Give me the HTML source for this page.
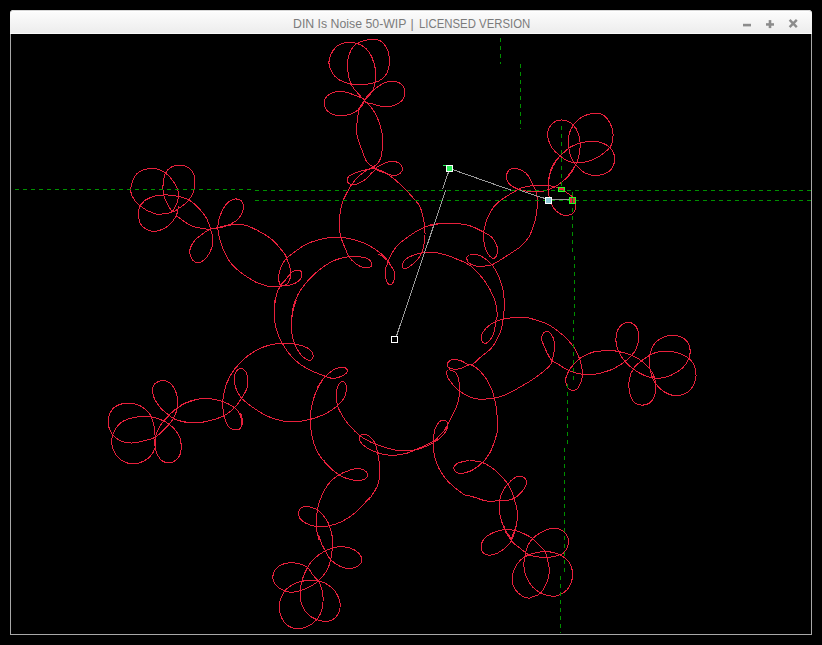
<!DOCTYPE html>
<html><head><meta charset="utf-8">
<style>
html,body{margin:0;padding:0;background:#000;width:822px;height:645px;overflow:hidden;}
#win{position:absolute;left:10px;top:10px;width:802px;height:625px;}
#title{position:absolute;left:0;top:0;width:802px;height:24px;border-radius:4px 4px 0 0;
background:linear-gradient(#fdfdfd,#ececec);box-shadow:inset 0 1px 0 #d6d6d6,inset 0 2px 0 #ffffff;}
#ttext{position:absolute;left:0;top:7px;width:802px;height:16px;font-family:"Liberation Sans",sans-serif;font-size:12.5px;color:#7b7b7b;white-space:nowrap;}
#ttext span{position:absolute;top:0;transform-origin:0 0;}
#t1{left:283px;transform:scaleX(0.984);}
#t2{left:400.5px;}
#t3{left:409px;transform:scaleX(0.91);}
svg{position:absolute;left:0;top:0;}
</style></head><body>
<div id="win">
<div id="title"><div id="ttext"><span id="t1">DIN Is Noise 50-WIP</span><span id="t2">|</span><span id="t3">LICENSED VERSION</span></div></div>
</div>
<svg width="822" height="645" viewBox="0 0 822 645">
<g shape-rendering="crispEdges">
<rect x="10" y="34" width="1" height="601" fill="#a8a8a8"/>
<rect x="811" y="34" width="1" height="601" fill="#a8a8a8"/>
<rect x="10" y="634" width="802" height="1" fill="#a8a8a8"/>
<rect x="10" y="33" width="802" height="1" fill="#fafafa"/>
</g>
<g fill="#8c8c8c">
<rect x="743" y="23.8" width="8" height="2.6"/>
<rect x="766" y="23.2" width="8" height="2.5"/>
<rect x="768.7" y="20.1" width="2.6" height="8"/>
</g>
<g stroke="#8c8c8c" stroke-width="2.4" stroke-linecap="butt">
<line x1="789.6" y1="19.8" x2="796.8" y2="27.2"/>
<line x1="796.8" y1="19.8" x2="789.6" y2="27.2"/>
</g>
<g id="curve" fill="none" stroke="#e8203c" stroke-width="1" shape-rendering="crispEdges">
<path d="M131.0 186.7C131.8 183.0 133.3 177.1 136.6 174.0C139.9 170.9 146.1 168.8 150.6 168.4C155.1 168.0 159.5 169.3 163.4 171.6C167.3 173.9 171.3 178.5 173.8 182.1C176.3 185.7 178.0 189.5 178.5 193.0C179.0 196.5 178.2 199.8 177.0 203.0C175.8 206.2 174.0 210.2 171.5 212.0C169.0 213.8 164.9 213.8 162.0 214.0C159.1 214.2 157.7 214.8 154.0 213.5C150.3 212.2 143.8 208.8 140.1 205.9C136.4 203.0 133.5 199.2 132.0 196.0C130.5 192.8 130.2 190.4 131.0 186.7Z"/>
<path d="M180.8 165.2C183.7 165.4 186.8 166.4 189.0 168.0C191.2 169.6 193.0 172.5 194.0 175.0C195.0 177.5 195.1 180.3 195.0 183.0C194.9 185.7 194.8 188.3 193.6 191.4C192.4 194.5 190.1 198.6 187.8 201.3C185.5 204.0 182.2 206.0 179.7 207.7C177.2 209.3 175.0 212.4 172.7 211.2C170.4 210.0 167.3 204.2 165.7 200.7C164.1 197.2 163.4 193.1 163.0 190.0C162.6 186.9 163.0 184.9 163.4 182.0C163.8 179.1 164.3 175.3 165.7 172.8C167.0 170.3 169.0 168.3 171.5 167.0C174.0 165.7 177.9 165.0 180.8 165.2Z"/>
<path d="M211.0 229.8C210.2 227.9 208.3 221.6 206.4 218.1C204.5 214.6 202.1 211.7 199.4 208.8C196.7 205.9 193.4 202.7 190.1 200.7C186.8 198.7 184.1 197.6 179.7 196.6C175.2 195.6 168.6 194.6 163.4 194.9C158.2 195.2 152.2 196.6 148.3 198.4C144.4 200.2 141.8 203.2 140.1 205.9C138.4 208.6 138.2 211.5 138.4 214.7C138.6 217.9 139.3 222.4 141.3 225.1C143.3 227.8 147.5 230.0 150.6 230.9C153.7 231.8 156.8 231.3 159.9 230.3C163.0 229.3 166.5 227.5 169.2 225.1C171.9 222.7 174.6 218.9 176.2 215.8C177.8 212.7 178.1 208.1 178.5 206.5"/>
<path d="M176.2 215.8C176.8 216.2 177.0 216.3 179.7 218.1C182.4 219.8 187.2 224.4 192.4 226.3C197.6 228.2 207.9 229.2 211.0 229.8"/>
<path d="M260.0 284.0C257.7 282.8 251.2 279.8 246.4 276.5C241.7 273.2 235.3 268.4 231.5 264.0C227.7 259.6 225.5 254.3 223.5 250.0C221.5 245.7 220.4 241.3 219.5 238.0C218.6 234.7 218.2 232.9 218.0 230.0C217.8 227.1 217.8 224.1 218.6 220.7C219.4 217.3 221.1 212.7 222.8 209.5C224.5 206.3 226.8 203.4 229.0 201.6C231.2 199.8 233.8 198.9 235.9 198.9C238.1 198.9 240.7 199.9 241.9 201.6C243.2 203.3 243.8 206.3 243.4 209.0C243.0 211.7 241.3 215.1 239.4 217.5C237.5 219.9 235.0 221.8 232.0 223.4C229.0 225.1 225.2 226.5 221.6 227.4C218.0 228.3 213.6 227.9 210.5 229.0C207.4 230.1 205.5 231.9 202.9 233.8C200.3 235.7 197.0 237.7 194.8 240.5C192.6 243.3 190.1 247.2 189.8 250.5C189.5 253.8 191.2 258.5 193.0 260.4C194.8 262.3 197.7 263.4 200.5 262.1C203.3 260.9 207.5 256.5 209.6 252.9C211.7 249.3 212.8 244.5 212.9 240.5C213.1 236.5 210.9 230.9 210.5 229.0"/>
<path d="M364.5 100.7C363.7 99.7 361.7 97.6 359.5 95.0C357.4 92.4 353.6 89.3 351.6 85.1C349.6 80.9 348.0 74.7 347.6 69.7C347.2 64.6 347.6 59.1 349.1 54.8C350.6 50.5 352.3 46.2 356.6 43.6C360.8 41.0 369.8 39.1 374.4 39.2C379.0 39.3 381.9 41.4 384.3 44.4C386.8 47.4 388.8 52.7 389.3 57.3C389.8 61.9 389.1 68.2 387.3 72.2C385.6 76.1 382.7 78.8 378.9 80.9C375.1 82.9 369.2 84.0 364.5 84.6C359.8 85.1 355.4 85.1 350.9 84.1C346.3 83.0 340.7 81.2 337.2 78.4C333.7 75.6 331.0 70.7 329.8 67.2C328.5 63.7 328.5 60.8 329.8 57.3C331.0 53.8 333.9 48.6 337.2 46.1C340.5 43.6 345.3 42.4 349.6 42.4C354.0 42.4 359.5 43.9 363.3 46.4C367.0 48.9 369.9 52.8 371.9 57.3C374.0 61.8 375.5 68.0 375.7 73.4C375.9 78.8 375.0 85.0 373.2 89.5C371.3 94.1 365.9 98.8 364.5 100.7"/>
<path d="M364.5 100.7C364.7 97.9 359.5 97.3 355.8 95.7C352.1 94.2 346.5 91.8 342.2 91.5C337.8 91.2 332.7 92.2 329.8 94.0C326.8 95.8 324.5 99.5 324.3 102.4C324.1 105.4 325.9 109.7 328.5 111.9C331.2 114.1 335.8 115.5 340.2 115.6C344.5 115.7 350.5 114.8 354.6 112.4C358.6 109.9 364.3 103.5 364.5 100.7Z"/>
<path d="M364.5 100.7C364.5 98.2 370.7 92.6 374.4 89.5C378.1 86.4 382.7 83.2 386.8 82.1C391.0 81.0 396.2 81.3 399.2 82.8C402.2 84.4 404.7 88.3 404.9 91.5C405.1 94.7 403.5 99.4 400.5 101.9C397.4 104.5 391.2 106.5 386.8 106.9C382.5 107.3 378.1 105.5 374.4 104.4C370.7 103.4 364.5 103.2 364.5 100.7Z"/>
<path d="M343.2 200.0C344.5 197.6 348.5 189.3 351.0 185.5C353.5 181.7 355.3 179.6 358.0 177.0C360.7 174.4 364.0 172.0 367.0 170.0C370.0 168.0 373.7 167.2 376.0 165.0C378.3 162.8 379.9 161.7 381.0 157.0C382.1 152.3 382.8 142.8 382.5 137.0C382.2 131.2 380.6 126.5 379.0 122.0C377.4 117.5 375.6 113.5 373.2 110.0C370.8 106.5 365.9 102.2 364.5 100.7"/>
<path d="M415.0 200.0C413.3 198.2 408.7 192.7 405.0 189.0C401.3 185.3 396.5 180.8 393.0 178.0C389.5 175.2 386.8 173.6 384.0 172.0C381.2 170.4 378.8 170.3 376.0 168.6C373.2 166.9 369.3 165.0 367.0 162.0C364.7 159.0 363.8 154.9 362.1 150.4C360.4 145.9 357.8 140.4 357.0 135.0C356.2 129.6 357.0 122.7 357.5 118.0C358.0 113.3 358.8 109.9 360.0 107.0C361.2 104.1 363.8 101.8 364.5 100.7"/>
<path d="M376.0 168.6C374.9 168.1 368.8 169.1 364.9 170.0C360.9 170.9 355.2 172.8 352.3 174.2C349.4 175.6 348.0 176.8 347.4 178.3C346.8 179.8 347.5 182.1 348.8 183.2C350.1 184.2 352.4 185.2 355.1 184.6C357.8 184.0 362.1 181.7 364.9 179.7C367.7 177.7 369.9 174.7 371.8 172.8C373.7 171.0 377.1 169.1 376.0 168.6Z"/>
<path d="M376.0 168.6C376.0 166.9 382.4 164.2 385.0 163.0C387.6 161.8 389.1 161.3 391.4 161.3C393.7 161.3 397.1 161.8 399.0 163.0C400.9 164.2 402.3 166.8 402.5 168.6C402.7 170.3 401.4 172.3 400.0 173.5C398.6 174.7 396.7 175.6 394.2 175.5C391.7 175.4 388.0 174.2 385.0 173.0C382.0 171.8 376.0 170.3 376.0 168.6Z"/>
<path d="M560.1 156.0C558.8 154.7 554.3 151.3 552.3 148.2C550.2 145.0 548.3 140.6 547.8 137.0C547.3 133.5 548.0 129.7 549.5 127.0C551.0 124.3 554.0 121.9 556.7 120.8C559.4 119.8 563.0 119.9 565.7 120.5C568.4 121.2 570.8 122.5 572.9 124.7C575.1 126.9 577.3 130.5 578.5 133.7C579.7 136.8 580.1 140.2 580.2 143.7C580.3 147.3 579.7 151.5 579.1 154.9C578.4 158.2 577.6 160.8 576.3 163.8C575.0 166.8 573.2 170.0 571.3 172.7C569.3 175.4 565.7 178.8 564.6 180.0"/>
<path d="M573.5 124.7C574.8 123.5 578.1 119.4 581.3 117.5C584.5 115.6 588.9 113.8 592.5 113.4C596.0 112.9 599.5 113.0 602.5 114.7C605.5 116.4 608.6 120.3 610.3 123.6C612.1 127.0 612.9 131.3 613.1 134.8C613.3 138.3 612.5 142.2 611.4 144.8C610.4 147.4 609.2 148.4 607.0 150.4C604.7 152.5 601.4 155.3 598.0 157.1C594.7 159.0 590.6 160.7 586.9 161.6C583.2 162.5 579.1 162.9 575.7 162.7C572.4 162.5 569.4 161.6 566.8 160.5C564.2 159.3 561.2 156.7 560.1 156.0"/>
<path d="M573.5 124.7C572.8 126.0 570.4 129.8 569.6 132.6C568.7 135.3 568.5 138.1 568.5 141.5C568.5 144.8 568.7 149.3 569.6 152.7C570.4 156.0 572.1 159.2 573.5 161.6C574.9 164.0 575.9 165.2 578.0 167.2C580.0 169.1 582.8 171.9 585.8 173.3C588.7 174.7 592.3 175.6 595.8 175.5C599.3 175.4 604.0 174.5 607.0 172.7C610.0 171.0 612.5 167.9 613.7 164.9C614.9 162.0 615.1 158.0 614.2 154.9C613.4 151.8 611.7 148.8 608.7 146.5C605.6 144.2 600.2 142.0 595.8 141.3C591.4 140.6 586.3 141.6 582.4 142.4C578.5 143.2 575.0 144.7 572.4 146.0C569.8 147.2 568.8 148.2 566.8 149.9C564.7 151.5 561.2 155.0 560.1 156.0"/>
<path d="M560.1 156.0C559.2 157.1 556.1 160.3 554.5 162.7C552.9 165.1 551.5 167.6 550.6 170.5C549.7 173.4 549.2 178.4 548.9 180.0"/>
<path d="M532.8 185.7C532.4 184.7 531.8 181.8 530.6 179.7C529.4 177.6 527.9 174.8 525.7 172.9C523.4 171.1 519.6 169.0 516.9 168.5C514.2 168.1 511.0 168.8 509.2 170.1C507.5 171.4 506.6 174.3 506.5 176.4C506.4 178.6 507.4 181.2 508.7 183.0C510.0 184.8 512.1 186.2 514.2 187.4C516.3 188.6 518.8 189.4 521.3 190.1C523.7 190.8 526.4 191.2 528.9 191.5C531.5 191.8 534.2 192.0 536.6 192.0C539.0 191.9 540.6 191.8 543.2 191.2C545.7 190.6 549.4 189.3 551.9 188.2C554.5 187.2 556.3 186.1 558.5 184.6C560.7 183.1 562.9 181.4 565.1 179.2C567.3 176.9 569.7 173.6 571.6 170.9C573.6 168.3 575.7 164.6 576.6 163.3"/>
<path d="M600.0 373.2C602.0 372.6 608.1 371.1 611.8 369.5C615.5 367.9 619.1 365.6 622.1 363.6C625.0 361.6 627.1 360.2 629.5 357.7C631.8 355.3 634.6 352.3 636.1 348.9C637.6 345.4 638.6 340.8 638.6 337.1C638.6 333.4 637.9 329.2 636.1 326.8C634.3 324.3 630.8 322.2 628.0 322.4C625.2 322.5 621.2 324.6 619.1 327.5C617.1 330.5 616.0 336.1 615.9 340.0C615.8 344.0 617.0 347.6 618.4 351.1C619.8 354.5 621.7 357.6 624.3 360.7C626.9 363.7 630.1 366.8 633.9 369.5C637.7 372.1 643.0 375.1 647.1 376.6C651.3 378.0 655.0 378.5 658.9 378.3C662.8 378.1 666.8 377.1 670.7 375.4C674.6 373.7 679.4 371.0 682.5 368.0C685.5 365.1 687.9 361.1 689.1 357.7C690.3 354.3 690.7 350.6 689.8 347.4C689.0 344.2 686.7 340.6 684.0 338.6C681.3 336.6 677.1 335.6 673.6 335.3C670.2 335.1 666.5 335.7 663.3 337.1C660.1 338.5 656.7 341.0 654.5 343.7C652.3 346.4 650.9 350.0 650.1 353.3C649.2 356.6 649.1 359.9 649.3 363.6C649.6 367.3 650.4 372.0 651.6 375.4C652.7 378.8 653.8 381.4 656.0 384.2C658.2 387.0 661.4 390.4 664.8 392.3C668.2 394.2 672.7 395.8 676.6 395.7C680.5 395.6 685.3 394.0 688.4 391.6C691.4 389.2 693.8 385.0 695.0 381.3C696.2 377.6 696.3 373.2 695.4 369.5C694.6 365.8 692.7 361.9 689.8 359.2C686.9 356.4 682.0 354.4 678.1 353.0C674.1 351.6 670.2 351.1 666.3 351.1C662.4 351.1 658.4 351.5 654.5 353.0C650.6 354.5 646.1 357.4 642.7 359.9C639.3 362.4 636.1 364.7 633.9 368.0C631.6 371.3 629.9 375.9 629.2 379.8C628.4 383.7 628.7 387.9 629.5 391.6C630.2 395.3 631.7 399.6 633.9 401.9C636.1 404.2 639.9 405.1 642.7 405.1C645.5 405.1 648.7 403.9 650.8 401.9C652.9 399.9 654.4 396.3 655.2 393.1C656.0 389.9 656.0 385.9 655.7 382.8C655.3 379.6 654.4 376.7 653.0 373.9C651.6 371.1 649.5 368.3 647.1 365.8C644.8 363.4 642.0 361.1 639.0 359.2C636.1 357.3 632.9 355.7 629.5 354.5C626.0 353.2 621.8 352.2 618.4 351.5C615.0 350.8 611.9 350.4 608.8 350.3C605.8 350.3 601.5 351.0 600.0 351.1"/>
<path d="M600.5 373.2C599.6 373.3 598.3 374.0 595.1 374.1C591.9 374.3 585.6 374.7 581.2 374.1C576.8 373.5 572.8 372.3 568.8 370.5C564.8 368.8 560.0 365.2 557.1 363.6C554.3 361.9 553.5 362.5 551.7 360.5C549.9 358.4 548.0 354.8 546.3 351.2C544.6 347.5 542.0 341.9 541.6 338.8C541.2 335.7 542.8 333.7 544.0 332.6C545.1 331.4 547.1 330.9 548.6 331.8C550.2 332.7 552.3 335.5 553.3 338.0C554.2 340.4 554.5 343.3 554.5 346.5C554.4 349.7 553.7 354.3 552.9 357.4C552.2 360.5 552.8 361.9 550.2 365.1C547.5 368.3 541.9 372.9 537.0 376.5C532.1 380.1 527.0 383.2 521.0 386.5C515.0 389.8 508.3 394.4 501.0 396.5C493.7 398.6 484.0 399.7 477.2 398.9C470.5 398.2 464.8 394.6 460.5 391.9C456.1 389.1 453.5 385.7 451.2 382.6C448.8 379.5 446.8 375.4 446.5 373.3C446.2 371.1 447.6 369.8 449.3 369.9C451.0 370.1 455.0 371.1 456.7 374.2C458.4 377.2 459.4 383.3 459.5 388.1C459.7 392.9 459.1 398.1 457.7 403.0C456.3 408.0 453.3 413.4 451.2 417.9C449.0 422.4 445.7 428.0 444.7 430.0"/>
<path d="M470.0 460.6C472.1 460.9 478.3 460.9 482.4 462.5C486.5 464.0 491.3 467.2 494.8 469.9C498.3 472.6 501.3 476.2 503.5 478.6C505.7 481.0 506.5 482.1 507.8 484.2C509.2 486.3 510.5 488.6 511.6 491.0C512.6 493.4 513.2 495.8 514.0 498.4C514.9 501.1 515.9 504.2 516.5 507.1C517.1 510.0 517.5 512.9 517.5 515.8C517.5 518.7 517.1 521.4 516.5 524.5C515.9 527.6 514.9 531.8 514.0 534.4C513.2 537.0 512.0 539.1 511.6 540.0"/>
<path d="M470.0 496.0C471.0 496.3 473.5 497.0 476.2 497.8C478.9 498.7 482.6 500.4 486.1 500.9C489.6 501.4 493.8 501.0 497.3 500.9C500.8 500.8 504.4 500.7 507.2 500.3C510.0 499.9 512.1 499.4 514.0 498.4C516.0 497.5 517.4 496.2 519.0 494.7C520.5 493.3 522.1 491.5 523.3 489.8C524.6 488.0 526.1 486.0 526.4 484.2C526.7 482.3 526.3 479.9 525.2 478.6C524.1 477.3 521.6 476.1 519.6 476.1C517.6 476.1 515.4 477.3 513.4 478.6C511.4 479.9 509.5 482.3 507.8 484.2C506.2 486.0 504.7 487.6 503.5 489.8C502.2 491.9 501.1 494.3 500.4 497.2C499.7 500.1 499.1 503.8 499.1 507.1C499.1 510.4 499.6 513.5 500.4 517.1C501.2 520.6 502.9 525.1 504.1 528.2C505.3 531.3 506.6 533.7 507.8 535.7C509.1 537.6 510.9 539.3 511.6 540.0"/>
<path d="M470.0 471.8C471.0 471.1 474.1 469.0 476.2 467.4C478.3 465.9 481.0 463.7 482.4 462.5C483.9 461.2 484.5 460.4 484.9 460.0"/>
<path d="M503.4 525.0C503.9 526.2 505.2 529.9 506.5 532.4C507.9 535.0 512.1 537.6 511.5 540.5C510.9 543.4 505.9 547.4 502.8 549.8C499.7 552.2 496.0 554.1 492.9 554.8C489.8 555.4 486.2 555.2 484.2 553.8C482.2 552.3 480.9 548.8 481.1 546.1C481.3 543.4 483.1 539.8 485.4 537.4C487.8 535.0 492.2 533.1 495.4 531.8C498.6 530.5 501.4 529.9 504.7 529.7C508.0 529.5 511.8 529.8 515.2 530.6C518.6 531.3 522.2 533.0 525.1 534.3C528.0 535.6 530.3 536.9 532.6 538.6C534.8 540.4 536.7 542.7 538.8 544.8C540.8 547.0 543.5 549.0 545.0 551.7C546.5 554.4 547.0 557.8 547.7 561.0C548.4 564.2 549.4 567.6 549.3 570.9C549.3 574.2 548.9 577.1 547.5 580.8C546.0 584.5 543.1 590.3 540.6 593.0C538.2 595.7 534.5 596.1 532.6 596.9C530.6 597.8 530.5 598.3 528.9 598.2C527.2 598.1 524.9 597.8 522.7 596.3C520.4 594.9 517.0 592.3 515.2 589.5C513.5 586.7 512.3 582.9 512.1 579.6C511.9 576.3 512.6 572.9 514.0 569.7C515.3 566.4 517.9 562.7 520.2 560.3C522.4 558.0 525.1 556.6 527.6 555.4C530.1 554.1 532.2 553.5 535.1 552.9C537.9 552.3 541.7 551.7 545.0 551.7C548.3 551.7 551.6 551.9 554.9 552.9C558.2 553.9 562.1 555.7 564.8 557.9C567.5 560.0 569.8 562.5 571.0 565.9C572.3 569.3 572.9 574.4 572.3 578.3C571.6 582.3 569.8 586.6 567.3 589.5C564.8 592.4 560.5 594.7 557.4 595.7C554.3 596.7 551.5 596.2 548.7 595.7C545.9 595.2 543.3 594.4 540.6 593.0C537.9 591.5 535.0 589.7 532.6 587.0C530.2 584.4 527.8 580.6 526.4 577.1C524.9 573.6 524.1 569.3 523.9 565.9C523.6 562.5 524.3 559.9 524.9 556.6C525.5 553.3 526.3 549.1 527.6 546.1C528.9 543.1 530.5 540.8 532.6 538.6C534.6 536.5 537.1 534.7 540.0 533.1C542.9 531.4 546.6 529.3 549.9 528.7C553.2 528.1 557.0 528.1 559.9 529.3C562.8 530.6 566.0 533.4 567.3 536.2C568.6 539.0 568.5 543.3 567.9 546.1C567.3 548.9 565.5 551.3 563.6 552.9C561.6 554.6 559.0 555.2 556.1 556.0C553.2 556.8 549.5 557.4 546.2 557.5C542.9 557.6 539.2 557.1 536.3 556.6C533.4 556.2 531.7 556.3 528.9 554.8C526.0 553.2 521.8 549.7 518.9 547.3C516.0 544.9 512.3 543.0 511.5 540.5C510.7 538.0 513.1 535.0 514.0 532.4C514.8 529.9 516.0 526.2 516.4 525.0"/>
<path d="M323.5 460.0C324.5 461.2 327.1 465.0 329.7 467.4C332.3 469.9 336.1 473.0 339.0 474.9C341.9 476.7 344.1 477.7 347.1 478.6C350.1 479.5 353.9 480.5 357.0 480.5C360.1 480.5 363.9 479.7 365.7 478.6C367.4 477.5 367.9 475.1 367.5 473.6C367.1 472.2 365.1 470.5 363.2 469.7C361.2 468.8 358.4 468.4 355.7 468.7C353.0 468.9 349.8 470.1 347.1 471.2C344.3 472.2 341.7 473.2 339.0 474.9C336.3 476.5 333.3 478.6 330.9 481.1C328.6 483.6 326.6 486.5 324.7 489.8C322.9 493.1 321.0 497.6 319.8 500.9C318.6 504.2 318.1 506.9 317.5 509.6C317.0 512.3 316.9 514.2 316.7 517.1C316.5 519.9 316.1 523.9 316.3 527.0C316.5 530.1 317.4 533.5 317.9 535.7C318.4 537.8 318.9 539.3 319.1 540.0"/>
<path d="M317.5 509.6C316.3 509.2 312.4 507.3 309.8 506.9C307.3 506.5 304.3 506.3 302.4 507.1C300.5 508.0 299.1 510.2 298.7 512.1C298.3 514.0 298.7 516.4 299.9 518.3C301.2 520.2 303.4 521.9 306.1 523.3C308.8 524.6 312.1 525.9 316.0 526.4C320.0 526.8 325.3 526.6 329.7 525.7C334.0 524.9 338.0 523.5 342.1 521.4C346.2 519.3 350.8 516.3 354.5 513.3C358.2 510.3 361.8 506.1 364.4 503.4C367.0 500.7 369.1 498.2 370.0 497.2"/>
<path d="M317.5 509.6C318.5 510.6 321.7 513.5 323.5 515.8C325.3 518.1 327.2 520.8 328.4 523.3C329.7 525.7 330.2 527.9 330.9 530.7C331.7 533.5 332.5 538.4 332.8 540.0"/>
<path d="M318.6 535.0C319.1 536.5 320.4 541.3 321.6 543.8C322.7 546.4 323.8 547.9 325.2 550.5C326.7 553.0 328.1 556.7 330.4 559.3C332.7 561.9 336.0 564.4 339.2 565.9C342.4 567.5 346.1 568.8 349.5 568.6C353.0 568.3 357.9 566.4 359.8 564.5C361.8 562.5 362.3 559.5 361.3 557.1C360.3 554.6 357.1 551.5 354.0 549.7C350.8 548.0 345.9 546.7 342.2 546.5C338.5 546.2 334.8 547.5 331.9 548.3C328.9 549.0 327.4 549.5 324.5 551.2C321.6 552.9 317.0 555.9 314.2 558.6C311.4 561.3 309.5 564.0 307.6 567.4C305.6 570.8 303.6 575.3 302.4 579.2C301.2 583.1 300.4 587.3 300.2 591.0C299.9 594.7 299.8 597.6 300.9 601.3C302.0 605.0 304.1 610.0 306.8 613.1C309.5 616.1 313.4 618.3 317.1 619.7C320.8 621.0 325.5 622.0 328.9 621.2C332.4 620.3 335.9 617.6 337.8 614.5C339.6 611.5 340.5 606.7 340.0 602.8C339.5 598.8 337.1 594.2 334.8 591.0C332.5 587.8 328.7 585.3 326.0 583.6C323.3 581.9 320.8 582.1 318.6 580.7C316.4 579.2 314.6 577.0 312.7 574.8C310.9 572.6 309.8 569.2 307.6 567.4C305.3 565.6 302.8 564.5 299.5 563.7C296.1 563.0 291.4 562.4 287.7 563.0C284.0 563.6 279.8 565.2 277.4 567.4C274.9 569.6 273.2 573.3 272.9 576.2C272.7 579.2 273.9 582.6 275.9 585.1C277.9 587.5 281.8 589.8 284.7 591.0C287.7 592.1 290.4 592.4 293.6 592.1C296.8 591.9 300.7 590.7 303.9 589.5C307.1 588.3 310.3 586.6 312.7 585.1C315.2 583.6 316.4 582.9 318.6 580.7C320.8 578.4 324.1 574.6 326.0 571.8C327.8 569.0 328.7 566.9 329.7 563.7C330.6 560.5 331.4 557.5 331.9 552.7C332.4 547.9 332.5 537.9 332.6 535.0"/>
<path d="M318.6 580.7C319.2 582.4 321.6 587.3 322.3 591.0C323.0 594.7 323.4 598.8 323.0 602.8C322.7 606.7 321.8 611.1 320.1 614.5C318.4 618.0 316.1 621.0 312.7 623.4C309.3 625.7 303.6 628.2 299.5 628.5C295.3 628.9 290.9 627.9 287.7 625.6C284.5 623.2 281.7 618.3 280.3 614.5C279.0 610.7 278.8 606.7 279.6 602.8C280.3 598.8 282.6 593.9 284.7 591.0C286.8 588.0 289.4 586.7 292.1 585.1C294.8 583.5 298.0 582.1 300.9 581.4C303.9 580.7 306.8 580.8 309.8 580.7C312.7 580.5 317.1 580.7 318.6 580.7"/>
<path d="M195.0 422.9C193.2 422.7 188.0 422.5 184.5 421.8C181.1 421.2 177.2 420.3 174.2 418.9C171.3 417.5 169.3 415.6 166.9 413.6C164.4 411.6 161.8 409.7 159.5 406.7C157.2 403.7 154.3 399.2 153.3 395.6C152.3 392.1 152.1 387.8 153.6 385.3C155.1 382.8 159.4 380.6 162.4 380.6C165.5 380.5 169.6 382.3 172.0 385.0C174.5 387.8 176.4 393.0 177.2 397.1C178.0 401.2 177.6 405.9 176.9 409.6C176.2 413.3 174.7 416.4 173.0 419.2C171.4 422.0 169.7 423.6 166.9 426.6C164.0 429.5 159.7 434.5 155.8 436.9C151.9 439.3 147.3 440.0 143.3 441.0C139.2 442.0 135.4 443.1 131.5 443.0C127.6 443.0 123.0 442.2 119.7 440.5C116.4 438.9 113.5 436.2 111.6 433.2C109.7 430.1 108.2 425.9 108.2 422.1C108.2 418.3 109.7 413.3 111.6 410.3C113.5 407.4 116.7 405.6 119.7 404.5C122.8 403.3 126.6 403.0 130.0 403.3C133.5 403.5 137.2 404.3 140.3 405.9C143.5 407.6 147.0 410.3 149.2 413.3C151.4 416.2 152.6 419.7 153.6 423.6C154.6 427.5 154.9 432.7 155.1 436.9C155.3 441.0 155.8 445.2 154.8 448.6C153.8 452.1 151.8 455.1 149.2 457.5C146.5 459.9 142.3 462.1 138.9 463.1C135.4 464.1 132.0 464.3 128.6 463.4C125.1 462.4 121.0 460.4 118.3 457.5C115.5 454.5 112.9 449.6 112.1 445.7C111.2 441.8 111.8 437.6 113.1 433.9C114.4 430.2 116.9 426.2 119.7 423.6C122.6 421.0 126.4 419.6 130.0 418.4C133.7 417.3 137.9 416.7 141.8 416.5C145.7 416.4 149.7 416.5 153.6 417.4C157.5 418.3 162.0 419.9 165.4 421.8C168.8 423.7 171.8 426.0 174.2 428.8C176.7 431.5 179.0 434.5 180.1 438.3C181.2 442.1 181.6 447.9 180.9 451.6C180.1 455.3 178.0 458.6 175.7 460.4C173.4 462.3 169.6 463.0 166.9 462.6C164.2 462.3 161.4 460.5 159.5 458.2C157.6 455.9 156.1 452.0 155.4 448.6C154.6 445.3 154.5 441.8 155.1 438.3C155.6 434.9 157.0 431.2 158.8 428.0C160.5 424.8 162.8 422.1 165.4 419.2C168.0 416.2 171.0 412.9 174.2 410.3C177.4 407.8 181.1 405.4 184.5 403.7C188.0 402.0 193.2 400.7 195.0 400.0"/>
<path d="M241.4 398.5C240.5 396.7 237.0 391.6 235.8 388.0C234.6 384.4 233.7 380.0 234.1 376.9C234.6 373.7 236.9 370.3 238.6 369.2C240.3 368.0 242.7 368.6 244.2 369.9C245.7 371.2 247.2 373.8 247.7 376.9C248.1 379.9 248.0 384.4 247.0 388.0C245.9 391.6 243.3 395.5 241.4 398.5C239.5 401.5 238.4 403.5 235.8 406.2C233.3 408.8 230.0 412.2 226.0 414.5C222.1 416.9 217.2 418.7 212.1 420.1C207.0 421.5 200.7 422.7 195.3 422.9C190.0 423.1 182.6 421.7 180.0 421.5"/>
<path d="M180.0 405.5C182.3 404.5 189.3 401.0 194.0 399.9C198.6 398.7 203.3 398.3 207.9 398.5C212.6 398.7 217.4 399.8 221.9 401.3C226.3 402.8 231.4 405.3 234.4 407.6C237.4 409.8 238.7 411.6 240.0 414.5C241.3 417.4 241.7 423.3 242.1 425.0"/>
<path d="M211.6 228.9C212.7 228.7 215.1 228.1 218.0 227.5C220.9 226.9 224.7 225.6 229.0 225.2C233.3 224.8 239.0 223.9 243.9 224.9C248.8 225.9 253.8 228.5 258.6 231.0C263.4 233.5 268.4 236.5 272.6 240.1C276.8 243.7 281.3 249.7 283.7 252.7C286.1 255.7 286.6 257.4 287.2 258.3"/>
<path d="M284.3 252.8C284.7 253.7 285.6 256.1 286.5 258.3C287.3 260.4 288.8 263.3 289.5 265.9C290.2 268.4 290.6 271.0 290.6 273.4C290.6 275.9 290.3 278.6 289.5 280.5C288.7 282.4 287.5 283.9 285.9 284.8C284.3 285.8 282.8 286.0 280.0 286.3C277.2 286.5 272.2 286.8 269.1 286.5C266.0 286.1 263.9 285.0 261.5 284.3C259.2 283.6 256.1 282.5 255.0 282.1"/>
<path d="M290.8 255.0C290.1 255.5 288.0 256.4 286.5 258.3C284.9 260.1 282.9 263.1 281.6 265.9C280.3 268.6 279.3 272.0 278.9 274.5C278.4 277.1 278.7 279.1 278.9 281.0C279.1 282.9 280.4 284.3 280.2 285.9C280.0 287.6 278.6 288.7 277.8 290.8C277.0 292.9 276.2 295.3 275.6 298.4C275.1 301.5 274.6 304.8 274.5 309.3C274.4 313.7 275.0 322.4 275.1 325.0"/>
<path d="M280.2 285.4C281.0 284.5 283.4 282.2 285.4 280.0C287.3 277.8 289.8 273.8 291.9 272.1C294.0 270.5 296.2 270.1 297.9 270.2C299.5 270.3 301.2 271.4 301.7 272.9C302.1 274.4 301.7 277.4 300.6 279.1C299.5 280.8 297.3 282.1 295.2 283.2C293.0 284.3 290.1 285.3 287.6 285.7C285.1 286.2 281.4 285.9 280.2 285.9"/>
<path d="M343.3 200.0C343.0 201.2 341.8 203.8 341.2 207.4C340.5 211.0 339.4 216.7 339.3 221.4C339.2 226.0 339.6 231.2 340.4 235.3C341.2 239.4 342.8 242.7 344.3 246.2C345.7 249.7 347.1 253.4 348.9 256.2C350.7 259.1 352.5 261.3 355.1 263.2C357.7 265.2 361.7 267.4 364.4 267.9C367.1 268.3 370.5 267.3 371.4 266.0C372.3 264.7 371.5 261.6 369.8 260.1C368.2 258.6 364.8 257.6 361.3 257.0C357.8 256.4 353.6 256.1 348.9 256.7C344.3 257.4 338.6 258.5 333.4 260.9C328.2 263.3 322.6 267.2 317.9 271.0C313.3 274.7 308.9 279.4 305.5 283.4C302.1 287.4 299.6 291.6 297.8 295.0C295.9 298.4 295.2 300.8 294.3 303.5C293.4 306.3 292.9 307.9 292.4 311.4C291.9 315.0 291.6 322.7 291.4 325.0"/>
<path d="M290.0 255.5C292.6 253.7 300.3 247.3 305.5 244.6C310.7 241.9 315.8 240.4 321.0 239.2C326.2 237.9 331.3 237.2 336.5 237.2C341.7 237.2 346.8 237.9 352.0 239.2C357.2 240.4 362.6 242.2 367.5 244.6C372.4 247.1 377.7 250.8 381.5 253.9C385.2 257.0 388.6 261.7 390.0 263.2"/>
<path d="M415.0 200.0C415.9 201.2 418.8 203.6 420.3 207.4C421.8 211.2 423.4 218.3 424.2 222.9C425.0 227.6 425.1 231.2 425.0 235.3C424.8 239.4 424.1 244.5 423.4 247.7C422.7 250.9 421.8 252.5 420.6 254.7C419.5 256.9 418.3 258.9 416.4 260.9C414.6 262.9 411.5 265.3 409.5 266.6C407.4 267.9 405.2 269.0 404.0 268.6C402.8 268.3 401.9 266.3 402.2 264.8C402.4 263.2 403.9 260.9 405.6 259.3C407.3 257.8 410.0 256.5 412.6 255.5C415.1 254.4 417.5 253.7 421.1 253.1C424.7 252.6 429.5 251.8 434.3 252.4C439.0 252.9 445.4 254.8 449.8 256.2C454.2 257.7 458.8 260.1 460.6 260.9"/>
<path d="M387.8 261.7C389.0 259.3 392.1 251.8 395.5 247.7C398.9 243.6 403.3 240.2 407.9 236.9C412.6 233.5 419.4 229.5 423.4 227.6C427.4 225.6 429.4 225.9 431.9 225.2C434.5 224.6 437.8 224.1 438.9 223.8"/>
<path d="M378.4 253.9C379.2 254.4 381.6 255.7 383.1 257.0C384.7 258.3 387.4 259.6 387.8 261.7C388.1 263.7 385.7 266.3 385.4 269.4C385.2 272.5 385.4 277.7 386.2 280.3C387.0 282.8 388.8 284.6 390.1 284.6C391.4 284.6 393.3 282.5 394.0 280.3C394.6 278.0 395.0 274.1 394.0 271.0C392.9 267.9 388.8 263.2 387.8 261.7"/>
<path d="M430.0 225.1C431.6 224.8 435.2 223.9 439.3 223.6C443.4 223.3 449.6 222.9 454.8 223.3C460.0 223.7 465.5 224.4 470.3 225.9C475.1 227.4 479.9 230.2 483.5 232.1C487.1 234.0 489.8 235.3 492.0 237.5C494.2 239.7 495.8 242.7 496.7 245.3C497.6 247.9 497.9 250.8 497.4 253.0C496.9 255.2 495.1 258.1 493.6 258.4C492.1 258.6 489.9 256.4 488.5 254.5C487.1 252.6 485.8 250.1 485.0 247.0C484.2 243.9 483.4 239.8 483.5 236.0C483.6 232.2 484.2 228.3 485.3 224.4C486.4 220.5 487.9 216.5 490.0 212.8C492.1 209.1 493.4 206.2 498.1 202.3C502.8 198.4 513.4 192.1 518.0 189.6C522.6 187.0 523.2 187.5 525.7 186.8C528.1 186.2 530.2 186.0 532.8 185.7C535.3 185.5 538.3 185.4 541.0 185.4C543.6 185.4 546.4 185.5 548.6 185.7C550.9 185.9 552.7 186.1 554.7 186.6C556.7 187.1 558.8 187.7 560.7 188.7C562.6 189.6 564.3 191.1 566.2 192.3C568.0 193.5 570.3 194.8 571.6 196.1C573.0 197.5 573.7 198.9 574.4 200.5C575.1 202.2 575.9 204.0 575.8 206.0C575.7 208.0 575.3 211.0 573.8 212.6C572.4 214.1 569.6 215.1 567.3 215.3C564.9 215.5 562.0 215.0 559.6 213.6C557.2 212.3 554.8 209.8 553.0 207.1C551.3 204.3 550.0 200.9 549.2 197.2C548.4 193.6 548.3 188.6 548.3 185.2C548.3 181.7 548.6 179.2 549.2 176.4C549.8 173.7 550.7 171.5 551.9 168.8C553.1 166.0 555.6 161.5 556.3 160.0"/>
<path d="M532.8 185.7C533.2 186.2 534.4 187.6 535.0 189.0C535.6 190.4 536.2 191.6 536.6 194.0C537.0 196.4 537.4 200.5 537.4 203.5C537.4 206.5 537.0 209.3 536.6 212.0C536.2 214.7 536.0 217.1 535.3 219.8C534.6 222.6 533.5 225.8 532.5 228.5C531.5 231.2 530.8 233.7 529.5 236.0C528.2 238.3 526.2 240.6 524.5 242.5C522.8 244.4 521.2 246.0 519.1 247.7C517.0 249.4 514.3 250.9 512.0 252.5C509.7 254.1 507.3 255.6 505.1 257.0C502.9 258.4 500.9 259.6 499.0 260.8C497.1 262.0 494.4 263.5 493.5 264.0"/>
<path d="M460.0 260.2C462.1 261.4 468.3 263.7 472.4 267.2C476.5 270.7 481.2 276.0 484.8 281.2C488.4 286.3 492.0 292.8 494.1 298.2C496.2 303.6 496.9 309.9 497.2 313.7C497.5 317.5 496.4 318.1 495.8 321.2C495.3 324.3 495.1 328.9 494.0 332.3C492.8 335.7 490.5 339.9 488.7 341.6C486.9 343.3 484.4 343.5 483.2 342.6C481.9 341.6 480.7 338.5 481.3 336.0C481.9 333.6 484.1 330.1 486.5 327.7C488.9 325.3 492.4 323.1 495.8 321.5C499.2 320.0 502.6 319.1 507.0 318.4C511.3 317.7 518.0 317.5 521.9 317.4C525.7 317.4 525.5 317.1 530.0 318.3C534.5 319.5 543.2 322.0 548.6 324.8C554.0 327.6 558.4 331.3 562.6 334.9C566.7 338.5 570.6 342.5 573.4 346.5C576.3 350.5 578.1 354.8 579.6 358.9C581.1 363.0 582.1 367.7 582.4 371.3C582.7 374.9 582.3 377.7 581.5 380.6C580.6 383.5 578.9 387.1 577.3 388.7C575.6 390.3 573.3 390.7 571.6 390.2C569.8 389.8 567.8 388.2 566.9 386.0C566.0 383.9 565.3 380.5 566.0 377.5C566.6 374.5 568.3 371.4 570.6 368.2C572.9 365.1 576.0 361.2 579.6 358.6C583.2 356.0 588.5 353.7 592.0 352.4C595.5 351.1 599.1 351.2 600.5 351.0"/>
<path d="M494.1 264.4C491.8 264.8 484.3 266.6 480.2 266.4C476.0 266.3 471.5 264.9 469.3 263.3C467.1 261.8 466.5 258.6 467.0 257.1C467.5 255.7 469.9 254.6 472.4 254.5C474.9 254.4 478.3 254.5 481.7 256.4C485.1 258.2 489.7 262.3 492.6 265.7C495.4 269.0 497.0 272.1 498.8 276.5C500.6 280.9 502.5 286.8 503.4 292.0C504.3 297.2 504.3 302.7 504.2 307.5C504.1 312.4 503.7 316.7 502.9 321.2C502.1 325.6 501.3 329.8 499.5 334.2C497.7 338.5 495.2 343.4 492.1 347.2C489.0 351.0 484.5 353.9 480.9 356.9C477.4 359.8 474.1 364.3 470.7 364.9C467.3 365.5 463.7 361.4 460.5 360.6C457.3 359.8 453.8 359.2 451.5 359.9C449.3 360.5 447.2 362.9 447.1 364.3C446.9 365.8 448.6 367.9 450.8 368.6C453.0 369.3 457.1 369.2 460.5 368.6C463.8 368.0 467.0 364.0 470.7 364.9C474.4 365.8 479.4 370.3 482.8 374.2C486.2 378.1 489.1 383.3 491.2 388.1C493.3 392.9 494.4 398.1 495.4 403.0C496.5 408.0 496.9 413.4 497.3 417.9C497.7 422.4 497.6 428.0 497.7 430.0"/>
<path d="M497.7 430.0C497.4 431.2 497.1 433.5 495.8 437.2C494.6 440.9 492.6 447.8 490.2 452.1C487.9 456.4 485.1 460.2 481.9 463.3C478.6 466.4 474.4 469.0 470.7 470.7C467.0 472.4 462.3 473.8 459.5 473.5C456.7 473.2 454.3 470.5 454.0 468.8C453.6 467.1 455.2 464.7 457.7 463.3C460.2 461.9 467.0 460.9 468.8 460.5"/>
<path d="M300.0 421.3C301.9 420.9 306.8 420.4 311.2 419.1C315.5 417.8 321.6 415.8 326.0 413.5C330.5 411.2 335.0 407.9 338.1 405.1C341.2 402.3 343.3 400.0 344.7 396.7C346.0 393.5 346.6 388.1 346.1 385.6C345.7 383.0 343.3 381.0 341.9 381.5C340.4 382.0 338.1 385.5 337.2 388.4C336.3 391.2 336.0 395.0 336.3 398.6C336.6 402.2 337.4 405.9 339.1 409.8C340.8 413.6 343.7 418.1 346.5 421.9C349.3 425.6 352.7 429.2 355.8 432.1C358.9 435.0 361.4 437.0 365.1 439.2C368.8 441.3 372.9 443.3 378.1 445.1C383.4 447.0 390.6 449.5 396.7 450.3C402.9 451.1 409.1 451.0 414.9 449.9C420.7 448.8 427.0 446.1 431.6 443.7C436.3 441.3 440.1 438.4 442.8 435.3C445.5 432.2 447.7 427.6 448.0 425.1C448.3 422.6 446.1 421.0 444.7 420.5C443.2 419.9 440.7 420.4 439.1 422.0C437.4 423.5 435.8 426.3 434.8 429.8C433.8 433.2 433.2 438.4 433.1 442.8C433.1 447.1 433.4 451.5 434.4 455.8C435.4 460.2 436.7 464.5 439.1 468.8C441.4 473.2 444.3 477.7 448.4 481.9C452.4 486.0 459.7 491.6 463.3 494.0C466.9 496.3 468.9 495.7 470.0 496.0"/>
<path d="M444.7 430.0C443.4 431.3 439.1 436.2 437.2 438.1C435.3 440.0 436.6 439.6 433.5 441.3C430.4 443.0 423.2 446.3 418.6 448.4C414.0 450.4 410.6 452.3 406.0 453.5C401.5 454.7 395.8 455.4 391.2 455.3C386.5 455.3 382.2 454.2 378.1 452.9C374.1 451.7 370.0 449.9 367.0 447.9C363.9 445.9 361.0 443.1 359.9 441.0C358.8 438.9 359.4 436.5 360.5 435.4C361.5 434.4 363.9 433.7 366.0 434.5C368.2 435.3 371.6 437.8 373.5 440.5C375.3 443.2 376.2 446.2 377.2 450.7C378.2 455.2 379.5 461.9 379.6 467.4C379.8 473.0 379.9 478.8 378.1 484.2C376.3 489.6 370.4 497.4 368.8 500.0"/>
<path d="M322.3 380.0C321.1 382.5 316.8 389.6 314.9 394.9C313.0 400.2 311.4 405.4 310.8 411.6C310.2 417.8 310.2 425.6 311.2 432.1C312.2 438.6 314.0 445.1 316.7 450.7C319.5 456.3 324.2 461.6 327.9 465.6C331.6 469.6 337.2 473.3 339.1 474.9"/>
<path d="M274.9 300.0C274.8 303.1 273.9 313.0 274.3 318.6C274.8 324.2 276.0 328.8 277.7 333.5C279.3 338.1 281.4 342.2 284.2 346.5C287.0 350.9 290.5 355.8 294.4 359.5C298.3 363.3 302.5 366.1 307.4 368.8C312.4 371.6 321.4 374.7 324.2 375.9"/>
<path d="M324.2 375.9C325.6 376.3 329.8 378.2 332.4 378.4C335.0 378.6 337.6 377.7 339.9 376.9C342.2 376.1 344.8 374.6 346.0 373.4C347.2 372.2 347.9 370.7 347.3 369.7C346.7 368.7 344.4 367.3 342.3 367.2C340.2 367.1 337.2 368.1 334.9 369.1C332.6 370.1 330.6 371.8 328.7 373.4C326.8 374.9 325.1 376.8 323.7 378.4C322.2 380.0 321.1 381.7 320.0 383.3C318.9 384.9 317.5 387.2 317.0 388.0"/>
<path d="M296.3 300.0C295.6 302.5 293.0 309.6 292.2 314.9C291.4 320.2 291.3 326.9 291.6 331.6C292.0 336.3 293.0 339.5 294.4 343.2C295.8 346.8 297.6 350.7 300.0 353.6C302.4 356.5 306.8 359.9 308.9 360.5C311.1 361.0 312.7 358.4 313.0 356.7C313.3 355.1 312.7 352.5 310.8 350.6C308.9 348.7 306.4 346.8 301.9 345.6C297.3 344.3 289.5 343.0 283.3 343.2C277.1 343.3 270.5 344.4 264.7 346.5C258.8 348.6 252.9 352.1 247.9 355.8C242.9 359.5 238.4 364.2 234.9 368.8C231.3 373.5 228.5 378.4 226.5 383.7C224.5 389.0 223.3 395.2 222.8 400.5C222.3 405.7 223.3 412.1 223.7 415.3C224.2 418.6 225.3 419.2 225.6 420.0"/>
<path d="M242.0 398.8C243.8 400.2 248.7 404.6 253.0 407.5C257.2 410.4 262.2 414.0 267.6 416.3C272.9 418.6 279.7 420.5 285.1 421.4C290.4 422.3 297.2 421.8 299.7 421.8"/>
<path d="M223.5 412.0C223.8 413.3 224.4 417.6 225.2 420.0C226.0 422.4 227.0 424.9 228.5 426.5C230.0 428.1 232.2 429.4 234.0 429.8C235.8 430.2 238.1 430.0 239.5 429.0C240.9 428.0 242.0 425.7 242.5 424.0C243.0 422.3 242.6 420.8 242.3 419.0C242.0 417.2 240.8 414.0 240.5 413.0"/>
</g>
<g fill="none" stroke="#009000" stroke-width="1" shape-rendering="crispEdges">
<path d="M15 189.5H255" stroke-dasharray="4 4"/>
<path d="M255 190.5H812" stroke-dasharray="4 4"/>
<path d="M255 200.5H812" stroke-dasharray="4 4"/>
<path d="M500.5 38V64" stroke-dasharray="4 4"/>
<path d="M520.5 64V129" stroke-dasharray="4 4"/>
<path d="M561.5 126V187" stroke-dasharray="4 4"/>
<path d="M572.5 192V256" stroke-dasharray="4 4"/>
<path d="M574.5 256V320" stroke-dasharray="4 4"/>
<path d="M573.5 320V384" stroke-dasharray="4 4"/>
<path d="M567.5 384V448" stroke-dasharray="4 4"/>
<path d="M564.5 448V576" stroke-dasharray="4 4"/>
<path d="M560.5 576V633" stroke-dasharray="4 4"/>
</g>
<g fill="none" stroke="#9a9a9a" stroke-width="1" shape-rendering="crispEdges">
<path d="M396.5 336L445.5 190.5M442.5 189.5L448.5 172M452.5 169.5L511 190.2M520 190.5L546 198.8M551 199.5H570"/>
</g>
<path id="tick" d="M443 165.5H445.5M445.5 166.5H446.5" stroke="#22ee55" stroke-width="1" shape-rendering="crispEdges"/>
<g shape-rendering="crispEdges" stroke-width="1">
<rect x="391.5" y="336.5" width="6" height="6" fill="#000" stroke="#fff"/>
<rect x="446.5" y="165.5" width="6" height="6" fill="#2aee58" stroke="#fff"/>
<rect x="545.5" y="197.5" width="6" height="6" fill="#8ccad6" stroke="#fff"/>
<rect x="569.5" y="197.5" width="6" height="6" fill="#e8203c" stroke="#22ff22"/>
<rect x="558.5" y="187.5" width="6" height="4" fill="#e8203c" stroke="#22ff22"/>
</g>
<g fill="#0a8a0a" shape-rendering="crispEdges"><rect x="572" y="198" width="1" height="5"/><rect x="559" y="190" width="4" height="1"/></g>
</svg>
</body></html>
